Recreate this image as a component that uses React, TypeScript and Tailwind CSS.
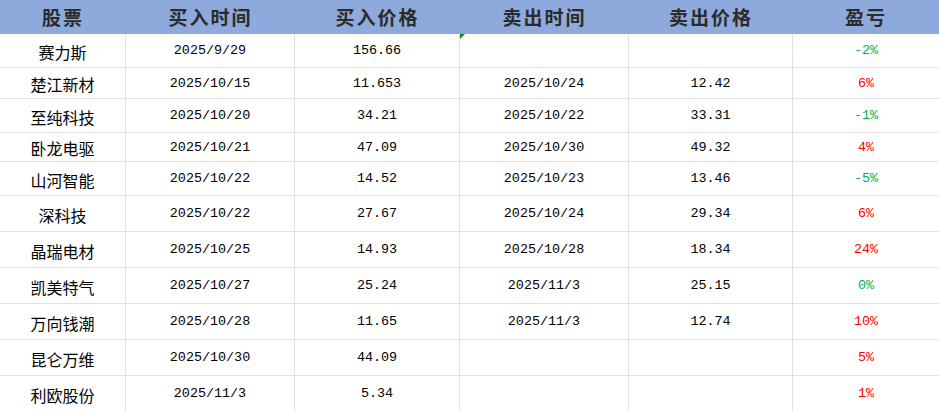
import React from "react";

type Row = {
  name: string;
  buyDate: string;
  buyPrice: string;
  sellDate: string;
  sellPrice: string;
  pnl: string;
  up: boolean;
  h: string;
};

const rows: Row[] = [
  { name: "赛力斯", buyDate: "2025/9/29", buyPrice: "156.66", sellDate: "", sellPrice: "", pnl: "-2%", up: false, h: "h-[34px]" },
  { name: "楚江新材", buyDate: "2025/10/15", buyPrice: "11.653", sellDate: "2025/10/24", sellPrice: "12.42", pnl: "6%", up: true, h: "h-[31px]" },
  { name: "至纯科技", buyDate: "2025/10/20", buyPrice: "34.21", sellDate: "2025/10/22", sellPrice: "33.31", pnl: "-1%", up: false, h: "h-[34px]" },
  { name: "卧龙电驱", buyDate: "2025/10/21", buyPrice: "47.09", sellDate: "2025/10/30", sellPrice: "49.32", pnl: "4%", up: true, h: "h-[29px]" },
  { name: "山河智能", buyDate: "2025/10/22", buyPrice: "14.52", sellDate: "2025/10/23", sellPrice: "13.46", pnl: "-5%", up: false, h: "h-[34px]" },
  { name: "深科技", buyDate: "2025/10/22", buyPrice: "27.67", sellDate: "2025/10/24", sellPrice: "29.34", pnl: "6%", up: true, h: "h-[36px]" },
  { name: "晶瑞电材", buyDate: "2025/10/25", buyPrice: "14.93", sellDate: "2025/10/28", sellPrice: "18.34", pnl: "24%", up: true, h: "h-[36px]" },
  { name: "凯美特气", buyDate: "2025/10/27", buyPrice: "25.24", sellDate: "2025/11/3", sellPrice: "25.15", pnl: "0%", up: false, h: "h-[36px]" },
  { name: "万向钱潮", buyDate: "2025/10/28", buyPrice: "11.65", sellDate: "2025/11/3", sellPrice: "12.74", pnl: "10%", up: true, h: "h-[36px]" },
  { name: "昆仑万维", buyDate: "2025/10/30", buyPrice: "44.09", sellDate: "", sellPrice: "", pnl: "5%", up: true, h: "h-[36px]" },
  { name: "利欧股份", buyDate: "2025/11/3", buyPrice: "5.34", sellDate: "", sellPrice: "", pnl: "1%", up: true, h: "h-[36px]" },
];

const headers = ["股票", "买入时间", "买入价格", "卖出时间", "卖出价格", "盈亏"];

const cols = "grid grid-cols-[126px_169px_165px_169px_164px_146px]";
const cell = "flex items-center justify-center border-r border-[#e1e1e1] pt-[2px]";
const num = "font-['Liberation_Mono',monospace] text-[13.4px] text-black";

export default function App() {
  return (
    <div className="w-[939px] h-[411px] overflow-hidden bg-white">
      <div className={`${cols} h-[34px] bg-[#8ea9db]`}>
        {headers.map((t) => (
          <div
            key={t}
            className="flex items-center justify-center font-['Noto_Sans_CJK_SC',sans-serif] text-[19px] font-bold tracking-[2px] text-[#2b2b2b]"
          >
            {t}
          </div>
        ))}
      </div>
      {rows.map((r, i) => (
        <div key={i} className={`${cols} ${r.h} border-b border-[#e1e1e1] relative`}>
          <div className={`${cell} font-['Noto_Sans_CJK_SC',sans-serif] text-[16px] text-black`}>{r.name}</div>
          <div className={`${cell} ${num}`}>{r.buyDate}</div>
          <div className={`${cell} ${num}`}>{r.buyPrice}</div>
          <div className={`${cell} ${num} relative`}>
            {i === 0 && (
              <span className="absolute left-0 top-0 w-0 h-0 border-t-[5px] border-r-[5px] border-t-[#128a12] border-r-transparent" />
            )}
            {r.sellDate}
          </div>
          <div className={`${cell} ${num}`}>{r.sellPrice}</div>
          <div
            className={`flex items-center justify-center pt-[2px] font-['Liberation_Mono',monospace] text-[13.4px] ${
              r.up ? "text-[#ff0000]" : "text-[#00b050]"
            }`}
          >
            {r.pnl}
          </div>
        </div>
      ))}
    </div>
  );
}
